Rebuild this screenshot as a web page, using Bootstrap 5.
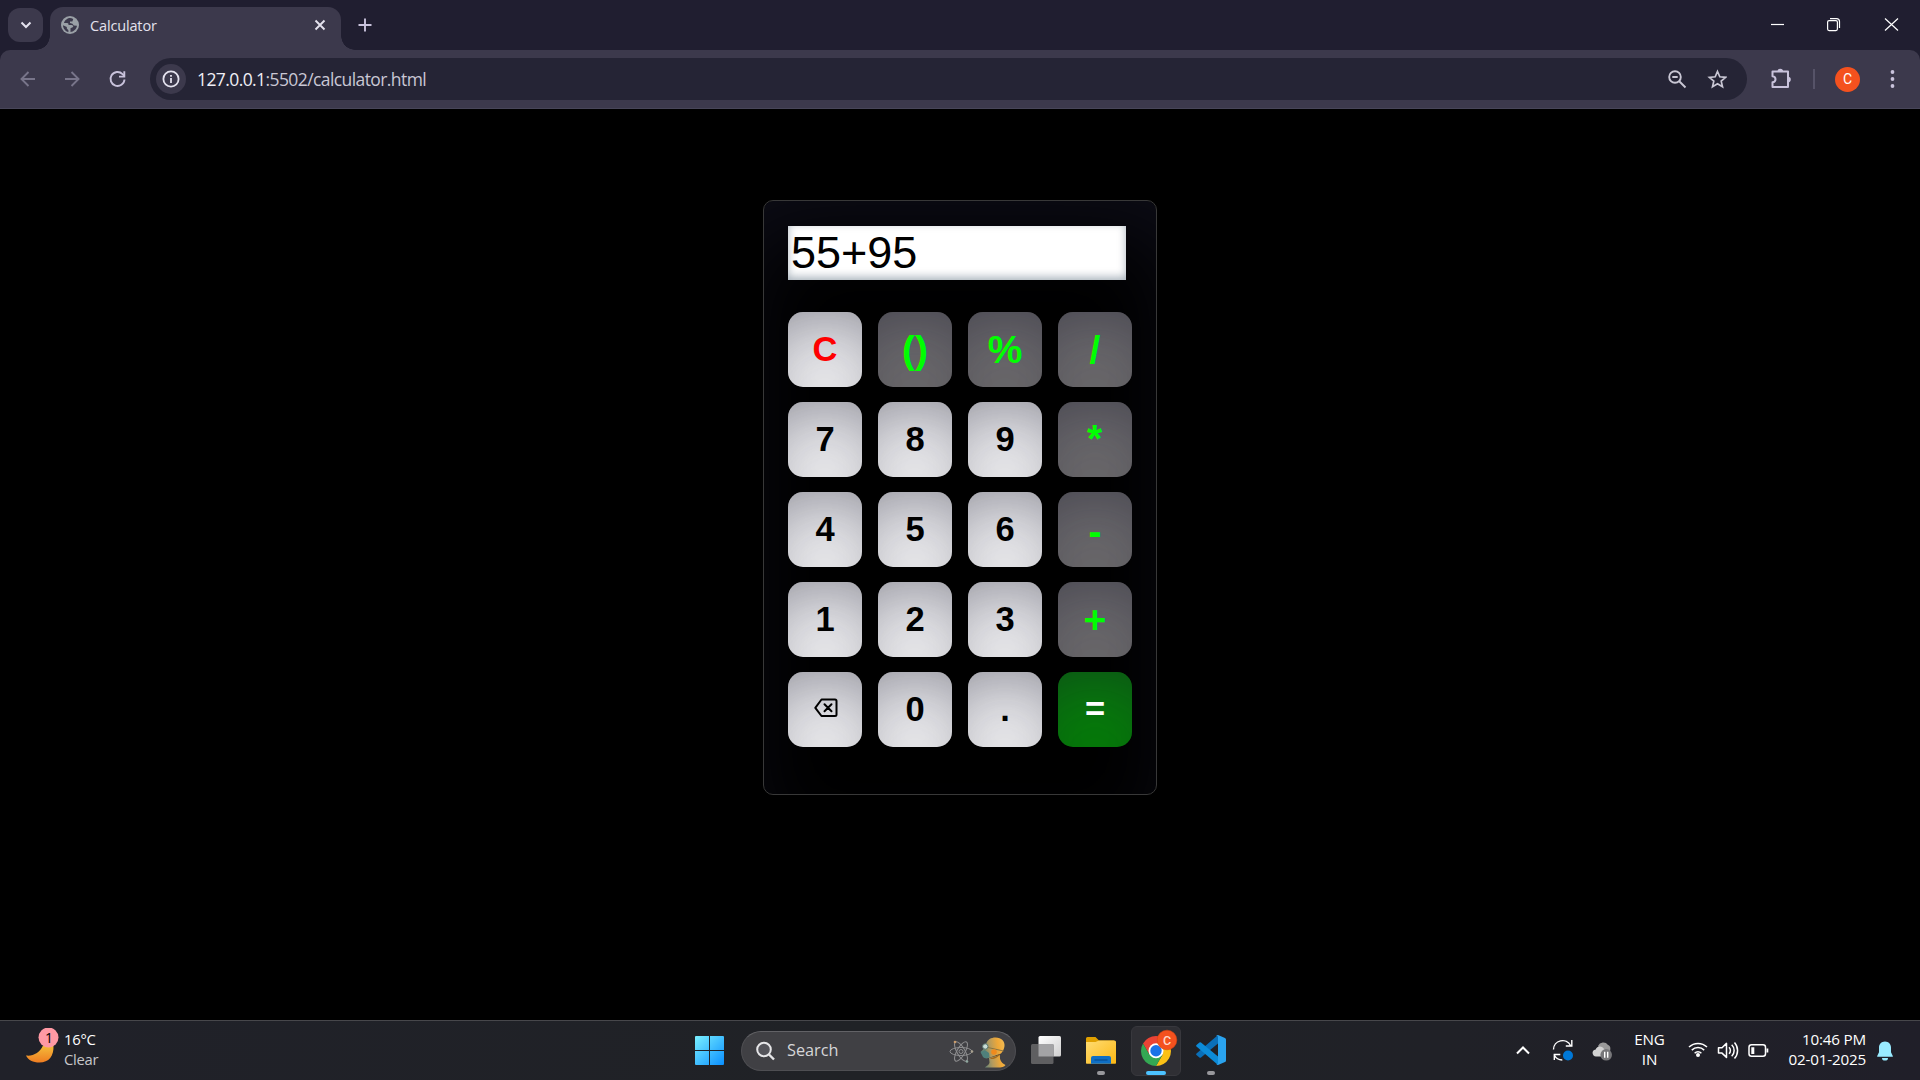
<!DOCTYPE html>
<html lang="en">
<head>
<meta charset="utf-8">
<title>Calculator</title>
<link href="https://cdn.jsdelivr.net/npm/bootstrap@5.3.0/dist/css/bootstrap.min.css" rel="stylesheet">
<style>
  body { width: 1920px; height: 1080px; overflow: hidden; background: #000; font-family: "Open Sans", "Noto Sans", sans-serif; color: #fff; }
  svg { display: block; flex: none; }
  .tabstrip { height: 50px; background: #201e30; padding: 7px 0 0 8px; }
  .tab-search { width: 35px; height: 34px; margin-top: 1px; border-radius: 12px; background: #3c394c; }
  .browser-tab { width: 291px; height: 43px; margin-left: 7px; padding: 0 15px 7px 11px; border-radius: 13px 13px 0 0; background: #3c394c; position: relative; }
  .browser-tab::before, .browser-tab::after { content: ""; position: absolute; bottom: 0; width: 14px; height: 14px; }
  .browser-tab::before { left: -14px; background: radial-gradient(circle at 0 0, transparent 13.5px, #3c394c 14px); }
  .browser-tab::after { right: -14px; background: radial-gradient(circle at 100% 0, transparent 13.5px, #3c394c 14px); }
  .tab-title { font-size: 14.5px; letter-spacing: -.15px; color: #e4e2ee; margin-left: 11px; line-height: 20px; padding-top: 1px; }
  .new-tab { margin: 11px 0 0 17px; }
  .window-buttons { margin-top: 10px; }
  .toolbar-wrap { background: #201e30; height: 59px; }
  .toolbar-row { height: 59px; background: #3c394c; border-radius: 10px 10px 0 0; border-bottom: 1px solid #484659; padding-left: 18px; }
  .omnibox { width: 1597px; height: 42px; border-radius: 21px; background: #252435; margin-left: 22px; padding: 0 20px 0 6px; }
  .info-dot { width: 30px; height: 30px; border-radius: 50%; background: #3c394c; }
  .url-text { font-size: 17.5px; letter-spacing: -.59px; margin-left: 11px; color: #c9c7d4; line-height: 24px; }
  .url-text span { color: #f0eff6; }
  .puzzle { margin-left: 23px; }
  .divider-v { width: 2px; height: 20px; margin-left: 21px; background: #565368; }
  .avatar-c { width: 25px; height: 25px; margin-left: 20px; border-radius: 50%; background: #f4511e; font: 14px/25px Roboto, sans-serif; color: #fff; }
  .kebab { margin-left: 30px; }
  .page-area { height: 911px; padding-top: 91px; }
  .calc { width: 394px; height: 595px; border: 1px solid #383838; border-radius: 10px; padding: 25px 24px; font-family: "Liberation Sans", Arial, sans-serif;
    box-shadow: rgba(50,50,93,.25) 0 45px 90px -18px inset, rgba(0,0,0,.3) 0 27px 54px -27px inset; }
  .screen { width: 338px; height: 54px; background: #fff; color: #000; font-size: 45px; line-height: 53px; padding-left: 3px; box-shadow: rgba(10,37,64,.35) 0 -3px 9px 0 inset; }
  .keys { display: grid; grid-template-columns: repeat(4, 74px); grid-auto-rows: 75px; gap: 15px 16px; margin-top: 32px; }
  .key { border: 0; padding: 0; border-radius: 15px; background: #f7f7f6; color: #000; font-weight: 700; font-size: 34.5px; line-height: 1; display: flex; align-items: center; justify-content: center;
    box-shadow: rgba(50,50,93,.25) 0 45px 90px -18px inset, rgba(0,0,0,.3) 0 27px 54px -27px inset; }
  .key-clear { color: #f00; }
  .key-op { background: #6e6c6b; color: #0f0; font-size: 39px; }
  .key-star { padding: 0 1px 3px 0; }
  .key-minus { padding-top: 3px; }
  .key-back { padding: 0 0 3px 1px; }
  .key-eq { background: green; color: #fff; }
  .taskbar { height: 60px; background: linear-gradient(90deg, #202129, #202226 45%, #202127 75%, #201f29); border-top: 1px solid #47474b; }
  .weather { width: 695px; padding-left: 26px; flex: none; }
  .weather-text, .tray-text { font-size: 14.8px; line-height: 20px; letter-spacing: -.25px; padding-bottom: 3px; }
  .tray-text { font-size: 15.2px; letter-spacing: -.18px; }
  .weather-text { margin-left: 5px; }
  .dim { color: #c6c6c9; }
  .search-pill { width: 275px; height: 40px; border-radius: 20px; background: #404044; border: 1px solid #4e4e52; border-top-color: #626266; margin-left: 17px; padding: 0 9px 0 14px; }
  .search-pill span { font-size: 16.3px; margin-left: 12px; color: #d6d6d8; }
  .app-slot { width: 50px; height: 50px; border-radius: 6px; position: relative; margin-left: 5px; padding-bottom: 1px; border: 1px solid transparent; }
  .app-slot::after { content: ""; position: absolute; bottom: 0; left: 50%; transform: translateX(-50%); width: 8px; height: 4px; border-radius: 2px; background: #98989c; }
  .app-slot.no-dot::after { display: none; }
  .app-slot.is-active { background: #2f2f34; border-color: #38383d; }
  .app-slot.is-active::after { width: 20px; background: #4cc2ff; }
  .tray { margin-left: auto; padding-right: 27px; }
  .tray-lang { width: 75px; }
  .tray-clock { width: 97px; }
  .bell { margin-left: 11px; }
</style>
<script src="https://cdn.jsdelivr.net/npm/bootstrap@5.3.0/dist/js/bootstrap.bundle.min.js"></script>
</head>
<body class="d-flex flex-column">
<header>
  <div class="tabstrip d-flex">
    <div class="tab-search d-flex align-items-center justify-content-center">
      <svg width="12" height="8" viewBox="0 0 12 8" fill="none" stroke="#e4e2ee" stroke-width="2"><path d="M1.5 1.5 6 6l4.500-4.500"/></svg>
    </div>
    <div class="browser-tab d-flex align-items-center">
      <svg width="18" height="18" viewBox="0 0 18 18"><circle cx="9" cy="9" r="9" fill="#9aa0a6"/><path fill="#3c394c" d="M9 2C7 2 3.500 4 3 7l3 .1c1.500 0 1.500 1 1.500 1.900h3.200c1.200 0 1.800 1 1.400 2l-2.600 1.300v3.600c3-.2 6-2.600 6.500-6.200l-3.300-.2-1.200-1.800-2.500-.6V5.500h2.400l.8-2.500C11.200 2.300 10 2 9 2zM2 9.300C2 12.500 4.500 15.500 7.400 16v-1.800l-1.600-1.700v-1.400z"/></svg>
      <span class="tab-title">Calculator</span>
      <svg class="ms-auto" width="12" height="12" viewBox="0 0 12 12" stroke="#e4e2ee" stroke-width="1.900"><path d="m1.500 1.500 9 9m0-9-9 9"/></svg>
    </div>
    <svg class="new-tab" width="14" height="14" viewBox="0 0 14 14" stroke="#c9c3dc" stroke-width="1.900"><path d="M7 .5v13M.5 7h13"/></svg>
    <div class="window-buttons ms-auto d-flex">
      <svg width="150" height="16" viewBox="0 0 150 16" fill="none" stroke="#fff" stroke-width="1.200"><path d="M1 7.500h13"/><rect x="57.600" y="3.600" width="9.800" height="10" rx="1.500"/><path d="M60 1.600h6.500q3 0 3 3v6.500"/><path d="m115 1.500 13 12m0-12-13 12"/></svg>
    </div>
  </div>
  <div class="toolbar-wrap">
    <div class="toolbar-row d-flex align-items-center">
      <svg width="110" height="20" viewBox="18 0 110 20" fill="none" stroke-width="1.900"><g stroke="#78758a"><path d="M35 10H22m6.500-7-7 7 7 7M65 10h13m-6.500-7 7 7-7 7"/></g><path stroke="#c9c3dc" d="M124.500 10.500a7 7 0 1 1-2-5.400l2 2"/><path stroke="#c9c3dc" d="M124.300 2.200v5.400H119"/></svg>
      <div class="omnibox d-flex align-items-center">
        <div class="info-dot d-flex align-items-center justify-content-center">
          <svg width="18" height="18" viewBox="0 0 18 18" fill="none" stroke="#e4e2ee" stroke-width="1.800"><circle cx="9" cy="9" r="7.600"/><path d="M9 8v5M9 5v1.800"/></svg>
        </div>
        <span class="url-text"><span>127.0.0.1</span>:5502/calculator.html</span>
        <svg class="ms-auto" width="60" height="20" viewBox="0 0 60 20" fill="none" stroke="#c9c7d4" stroke-width="1.900"><circle cx="8" cy="8" r="5.800"/><path d="m12 12 6.500 6.500M5.300 8h5.400"/><path d="m50.500 2.500 2.300 5.300 5.800.5-4.400 3.800 1.300 5.600-5-3-5 3 1.300-5.600-4.400-3.800 5.800-.5z" stroke-width="1.700"/></svg>
      </div>
      <svg class="puzzle" width="22" height="22" viewBox="0 0 22 22"><path fill="none" stroke="#c9c3dc" stroke-width="2" stroke-linejoin="round" d="M2.500 3.500h15.500v15.500H2.500v-4.700c4-.4 4-5.700 0-6.100z"/><path fill="#c9c3dc" d="M7.500 3.500a2.800 2.800 0 0 1 5.600 0zM18 8.800a2.800 2.800 0 0 1 0 5.600z"/></svg>
      <div class="divider-v"></div>
      <div class="avatar-c text-center">C</div>
      <svg class="kebab" width="5" height="18" viewBox="0 0 5 18" fill="#c9c3dc"><circle cx="2.500" cy="2" r="1.900"/><circle cx="2.500" cy="9" r="1.900"/><circle cx="2.500" cy="16" r="1.900"/></svg>
    </div>
  </div>
</header>

<main class="page-area d-flex justify-content-center align-items-start">
  <div class="calc">
    <div class="screen">55+95</div>
    <div class="keys">
      <button class="key key-clear">C</button><button class="key key-op">()</button><button class="key key-op">%</button><button class="key key-op">/</button>
      <button class="key">7</button><button class="key">8</button><button class="key">9</button><button class="key key-op key-star">*</button>
      <button class="key">4</button><button class="key">5</button><button class="key">6</button><button class="key key-op key-minus">-</button>
      <button class="key">1</button><button class="key">2</button><button class="key">3</button><button class="key key-op">+</button>
      <button class="key key-back" aria-label="Backspace"><svg width="24" height="20" viewBox="0 0 24 20" fill="none" stroke="#000" stroke-width="2" stroke-linejoin="round" stroke-linecap="round"><path d="M7.500 1.500h13.500q1.500 0 1.500 1.500v13.500q0 1.500-1.500 1.500H7.500L1.300 9.800zM10.500 6.200l7 7m0-7-7 7"/></svg></button>
      <button class="key">0</button><button class="key">.</button><button class="key key-eq">=</button>
    </div>
  </div>
</main>

<footer class="taskbar d-flex align-items-center">
  <div class="weather d-flex align-items-center">
    <svg width="33" height="46" viewBox="0 -4 33 46"><defs><linearGradient id="moon" x1="0" y1="0" x2="0" y2="1"><stop offset="0" stop-color="#f5bd3a"/><stop offset="1" stop-color="#ef7d22"/></linearGradient></defs><path fill="url(#moon)" d="M0 23.500c7 1 14-3 17-10h10.500C28 24 23 30.500 13.500 30.500 7 30.500 2 28 0 23.500z"/><circle cx="22.500" cy="5.500" r="10" fill="#ff99a4"/><text x="23" y="10.500" font-family="Open Sans" font-size="14" text-anchor="middle" fill="#000">1</text></svg>
    <div class="weather-text"><div>16°C</div><div class="dim">Clear</div></div>
  </div>
  <svg width="29" height="29" viewBox="0 0 29 29"><defs><linearGradient id="win" x1="0" y1="0" x2="1" y2="1"><stop offset="0" stop-color="#7af0ff"/><stop offset="1" stop-color="#0a8fff"/></linearGradient></defs><path fill="url(#win)" d="M1 0h13v14H0V1q0-1 1-1zM15 0h13q1 0 1 1v13H15zM0 15h14v14H1q-1 0-1-1zM15 15h14v13q0 1-1 1H15z"/></svg>
  <div class="search-pill d-flex align-items-center">
    <svg width="19" height="20" viewBox="0 0 19 20"><circle cx="8" cy="8.500" r="6.800" fill="#55555b" stroke="#e6e6e8" stroke-width="2"/><path d="m13 13.500 5 5" stroke="#e6e6e8" stroke-width="2.400"/></svg>
    <span>Search</span>
    <svg class="ms-auto" width="58" height="34" viewBox="0 0 58 34"><g fill="none" stroke="#8d8d8f" stroke-width="1"><ellipse cx="13" cy="17.500" rx="11" ry="4"/><ellipse cx="13" cy="17.500" rx="11" ry="4" transform="rotate(60 13 17.500)"/><ellipse cx="13" cy="17.500" rx="11" ry="4" transform="rotate(120 13 17.500)"/><circle cx="13" cy="17.500" r="2"/></g><circle cx="7" cy="8" r="1.300" fill="#c89a6a"/><circle cx="24" cy="17.500" r="1.300" fill="#a8a08f"/><circle cx="19" cy="27.500" r="1.300" fill="#8fa8a0"/>
      <defs><linearGradient id="skin" gradientUnits="userSpaceOnUse" x1="33" y1="20" x2="57" y2="16"><stop offset="0" stop-color="#527f7a"/><stop offset=".4" stop-color="#b39a5e"/><stop offset=".75" stop-color="#efa838"/><stop offset="1" stop-color="#f2b850"/></linearGradient></defs>
      <path fill="url(#skin)" d="M37 33.500c1-1.500 4-2 4.500-5l-.5-4.500 11-3c-.5 4 .5 7.500 5.500 10-1 2-4 2.500-8 2.500z"/>
      <path fill="url(#skin)" d="M38 10c1.500-4.500 5-6.500 9.500-6.500 6 0 9.500 4 9 8.500-.3 3-1.500 5-3.500 7.500L42 23.500c-4 1.500-6.500.500-7-2l-2.500-3.500 3-3z"/>
      <path fill="#4f807b" d="m32.800 18.500 4-2.500 4.200 3 .5 4c-2 2-5 1.500-6.500 0z"/><path stroke="#8a7440" stroke-width="1" d="M40 13.500l15.500 3.500"/><circle cx="46" cy="18" r="2.800" fill="#f08a1d"/><circle cx="37.300" cy="12.500" r="2.700" fill="#c9dcd6" stroke="#56736d"/><path stroke="#a36a1c" stroke-width="1.200" fill="none" d="M42.500 24.500q5 0 9-4"/></svg>
  </div>
  <div class="d-flex">
    <div class="app-slot no-dot d-flex align-items-center justify-content-center"><svg width="30" height="28" viewBox="0 0 30 28"><defs><linearGradient id="tv" x1="0" y1="0" x2="1" y2="1"><stop offset="0" stop-color="#fff"/><stop offset="1" stop-color="#cfcfcf"/></linearGradient></defs><rect x="7.500" width="22.500" height="20.500" rx="1.500" fill="url(#tv)"/><rect y="8" width="22.500" height="20" rx="1.500" fill="#5f5f61"/><path fill="#a3a3a5" d="M7.500 8h15v12.500h-15z"/></svg></div>
    <div class="app-slot d-flex align-items-center justify-content-center"><svg width="30" height="27" viewBox="0 0 30 27"><defs><linearGradient id="fold" x1="0" y1="0" x2="1" y2="1"><stop offset="0" stop-color="#ffdc73"/><stop offset="1" stop-color="#fcb813"/></linearGradient></defs><path fill="#e0a000" d="M0 1.500Q0 0 1.500 0h8L13 3.500h15v5H0z"/><path fill="url(#fold)" d="M0 5h9.500L13 3.500h15.500q1.500 0 1.500 1.500v21q0 .8-.8.800H.8q-.8 0-.8-.8z"/><path fill="#0f6fc5" d="M5 26.800V21q0-2 2-2h16q2 0 2 2v5.800z"/><path stroke="#064c91" stroke-width="1.200" d="M8.500 23h13"/></svg></div>
    <div class="app-slot is-active d-flex align-items-center justify-content-center"><svg width="46" height="46" viewBox="-4 -4 46 46"><path fill="#ea4335" d="M6.010 12.500A15 15 0 0 1 31.990 12.500H19L12.500 23.750z"/><path fill="#fbc116" d="M31.990 12.500A15 15 0 0 1 19 35L25.500 23.750 19 12.500z"/><path fill="#34a853" d="M19 35A15 15 0 0 1 6.010 12.500L12.500 23.750H25.500z"/><circle cx="19" cy="19.700" r="7.500" fill="#fff"/><circle cx="19" cy="19.700" r="5.700" fill="#1a73e8"/><circle cx="30" cy="9" r="9.800" fill="#f4511e" stroke="#d9440f" stroke-width=".6"/><text x="30" y="13.600" font-family="Roboto" font-size="12.500" font-weight="500" text-anchor="middle" fill="#ffd9cc">C</text></svg></div>
    <div class="app-slot d-flex align-items-center justify-content-center"><svg width="30" height="30" viewBox="0 0 30 30"><path fill="#0a6fb8" d="M22 0v8.500L5 22.500q-.8.600-1.600 0L.5 20q-.8-.8 0-1.600z"/><path fill="#0c8bd8" d="M22 30v-8.500L5 7.500q-.8-.6-1.600 0L.5 10q-.8.800 0 1.600z"/><path fill="#2aa3ee" d="m22 0 7 3q1 .5 1 1.500v21q0 1-1 1.500l-7 3q-1 0-2-1 2 .8 2-1V2q0-1.800-2-1 1-1 2-1z"/></svg></div>
  </div>
  <div class="tray d-flex align-items-center">
    <svg width="98" height="24" viewBox="0 0 98 24" fill="none" stroke="#fff"><path stroke-width="2" d="m3 14.500 6-6 6 6"/><g stroke-width="1.400"><path d="M39.500 10.500a9 9 0 0 1 17-4M57.800 1v6h-6M40.300 21v-5.500h6M40.300 16c1.500 3 4.500 5 8 5"/></g><circle cx="54" cy="16.500" r="5" fill="#0078d7" stroke="none"/><g stroke="none"><path fill="#9a9a9a" d="M84 7a5.800 5.800 0 0 1 10-1c2 .3 3 3 2 6l-6 4z"/><path fill="#d2d2d2" d="M82 17.500c-4-.2-5-6.500-.3-7 1-4 7-4 8.300-.5l3 3-3 4.500z"/><circle cx="92.200" cy="15.800" r="5.800" fill="#77777a"/><path fill="#fff" d="M90 12.800h1.400v6H90zM93 12.800h1.400v6H93z"/></g></svg>
    <div class="tray-text tray-lang text-center">ENG<br>IN</div>
    <svg width="82" height="24" viewBox="0 0 82 24" fill="none" stroke="#fff" stroke-width="1.500"><path d="M2 8a13 13 0 0 1 18 0M4.800 11.100a9 9 0 0 1 12.400 0M7.600 14.200a5 5 0 0 1 6.800 0"/><circle cx="11" cy="16" r="2" fill="#fff" stroke="none"/><path d="M31.500 8.700H35l4.500-4.300v14L35 14.100h-3.500z" stroke-linejoin="round"/><path d="M42 8.200a4.500 4.500 0 0 1 0 6.500M44.700 5.700a8 8 0 0 1 0 11.500M47.500 3.400a12 12 0 0 1 0 16"/><rect x="62" y="5.700" width="16.500" height="11.500" rx="2.500"/><path fill="#fff" stroke="none" d="M64.300 8.200h3V15h-3zM79.500 9.400h1.800v4h-1.800z"/></svg>
    <div class="tray-text tray-clock text-end">10:46 PM<br>02-01-2025</div>
    <svg class="bell" width="16" height="20" viewBox="0 0 16 20" fill="#99ebff"><path d="M8 .5c-3.700 0-6 2.800-6 6v4.700L.2 15v.8h15.600V15L14 11.200V6.500c0-3.200-2.300-6-6-6zM5 17h6a3 2.600 0 0 1-6 0z"/></svg>
  </div>
</footer>
</body>
</html>
